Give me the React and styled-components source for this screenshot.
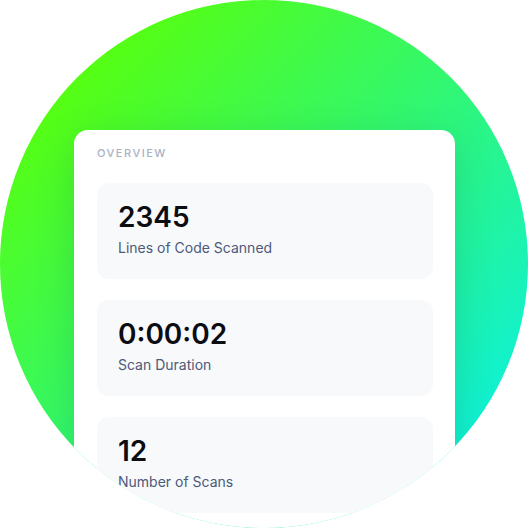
import React from "react";
import styled, { createGlobalStyle } from "styled-components";

const GlobalStyle = createGlobalStyle`
  html, body {
    margin: 0;
    padding: 0;
    background: #fff;
  }
  body {
    font-family: Inter, "Noto Sans", "Liberation Sans", sans-serif;
    -webkit-font-smoothing: antialiased;
  }
`;

const Circle = styled.div`
  width: 528px;
  height: 528px;
  clip-path: circle(264px at 50% 50%);
  box-sizing: border-box;
  padding: 130px 0 0 74px;
  background: linear-gradient(135deg, #58ff0c 12%, #36f864 45%, #0af0e4 92%);
`;

const Card = styled.div`
  width: 381px;
  height: 398px;
  box-sizing: border-box;
  padding: 15px 22px 0 23px;
  background: #fff;
  border-radius: 14px 14px 0 0;
  box-shadow: 0 10px 40px rgba(10, 60, 40, 0.16);
`;

const Heading = styled.div`
  font-size: 11px;
  line-height: 16px;
  font-weight: 500;
  letter-spacing: 1.5px;
  text-transform: uppercase;
  color: #a9b2c3;
`;

const StatList = styled.div`
  display: flex;
  flex-direction: column;
  gap: 21px;
  margin-top: 22px;
`;

const Stat = styled.div`
  height: 96px;
  flex-shrink: 0;
  box-sizing: border-box;
  padding: 17px 21px 0;
  background: #f8f9fb;
  border-radius: 12px;
`;

const Value = styled.div`
  font-size: 28px;
  line-height: 34px;
  font-weight: 600;
  color: #0b0d12;
`;

const Label = styled.div`
  margin-top: 4px;
  font-size: 14px;
  line-height: 20px;
  color: #4d5a7a;
`;

const stats = [
  { value: "2345", label: "Lines of Code Scanned" },
  { value: "0:00:02", label: "Scan Duration" },
  { value: "12", label: "Number of Scans" },
];

export default function App() {
  return (
    <>
      <GlobalStyle />
      <Circle>
        <Card>
          <Heading>Overview</Heading>
          <StatList>
            {stats.map((s) => (
              <Stat key={s.label}>
                <Value>{s.value}</Value>
                <Label>{s.label}</Label>
              </Stat>
            ))}
          </StatList>
        </Card>
      </Circle>
    </>
  );
}
